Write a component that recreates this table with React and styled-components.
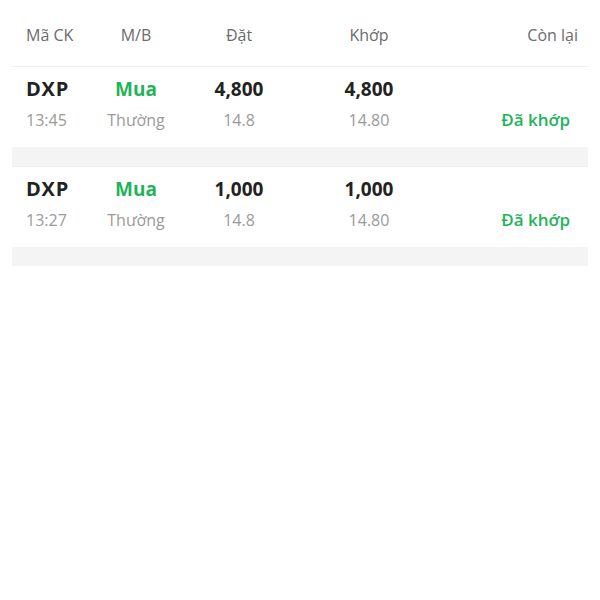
import React from 'react';
import styled, { createGlobalStyle } from 'styled-components';

const GlobalStyle = createGlobalStyle`
  body {
    margin: 0;
    background: #ffffff;
    font-family: 'Open Sans', 'Noto Sans', sans-serif;
  }
`;

const orders = [
  { code: 'DXP', time: '13:45', side: 'Mua', type: 'Thường', qty: '4,800', price: '14.8', matchQty: '4,800', matchPrice: '14.80', status: 'Đã khớp' },
  { code: 'DXP', time: '13:27', side: 'Mua', type: 'Thường', qty: '1,000', price: '14.8', matchQty: '1,000', matchPrice: '14.80', status: 'Đã khớp' },
];

const App = () => {
  return (
    <>
      <GlobalStyle />
      <Page>
        <Header>
          <Cell>Mã CK</Cell>
          <Cell $align='center'>M/B</Cell>
          <Cell $align='center'>Đặt</Cell>
          <Cell $align='center'>Khớp</Cell>
          <Cell $align='right'>Còn lại</Cell>
        </Header>
        <List>
          {orders.map((o, i) => (
            <Card key={i}>
              <Cell>
                <Code>{o.code}</Code>
                <Sub>{o.time}</Sub>
              </Cell>
              <Cell $align='center'>
                <Main $green>{o.side}</Main>
                <Sub>{o.type}</Sub>
              </Cell>
              <Cell $align='center'>
                <Main>{o.qty}</Main>
                <Sub>{o.price}</Sub>
              </Cell>
              <Cell $align='center'>
                <Main>{o.matchQty}</Main>
                <Sub>{o.matchPrice}</Sub>
              </Cell>
              <Cell $align='right'>
                <Main />
                <Status>{o.status}</Status>
              </Cell>
            </Card>
          ))}
        </List>
      </Page>
    </>
  );
};

const Page = styled.div`
  width: 600px;
`;

const Header = styled.div`
  display: grid;
  grid-template-columns: 60px 100px 106px 154px 1fr;
  padding: 24px 22px 20px 26px;
  line-height: 22px;
  font-size: 16px;
  color: #6b6b6b;
`;

const List = styled.div`
  margin: 0 12px;
  background: #f4f4f4;
  padding-bottom: 19px;
`;

const Card = styled.div`
  display: grid;
  grid-template-columns: 60px 100px 106px 154px 1fr;
  padding: 10px 18px 16px 14px;
  background: #ffffff;
  border-top: 1px solid #eeeeee;
  margin-bottom: 19px;
  &:last-child {
    margin-bottom: 0;
  }
`;

const Cell = styled.div`
  display: flex;
  flex-direction: column;
  align-items: ${(p) =>
    p.$align === 'center' ? 'center' : p.$align === 'right' ? 'flex-end' : 'flex-start'};
  white-space: nowrap;
`;

const Main = styled.div`
  height: 24px;
  line-height: 24px;
  font-size: 19px;
  font-weight: 700;
  color: ${(p) => (p.$green ? '#1fb45a' : '#222222')};
`;

const Code = styled(Main)`
  font-size: 20px;
  letter-spacing: 0.8px;
`;

const Sub = styled.div`
  margin-top: 8px;
  line-height: 22px;
  font-size: 16px;
  color: #9a9a9a;
`;

const Status = styled.div`
  margin-top: 8px;
  line-height: 22px;
  font-size: 17px;
  font-weight: 600;
  color: #1fb45a;
`;

export default App;
